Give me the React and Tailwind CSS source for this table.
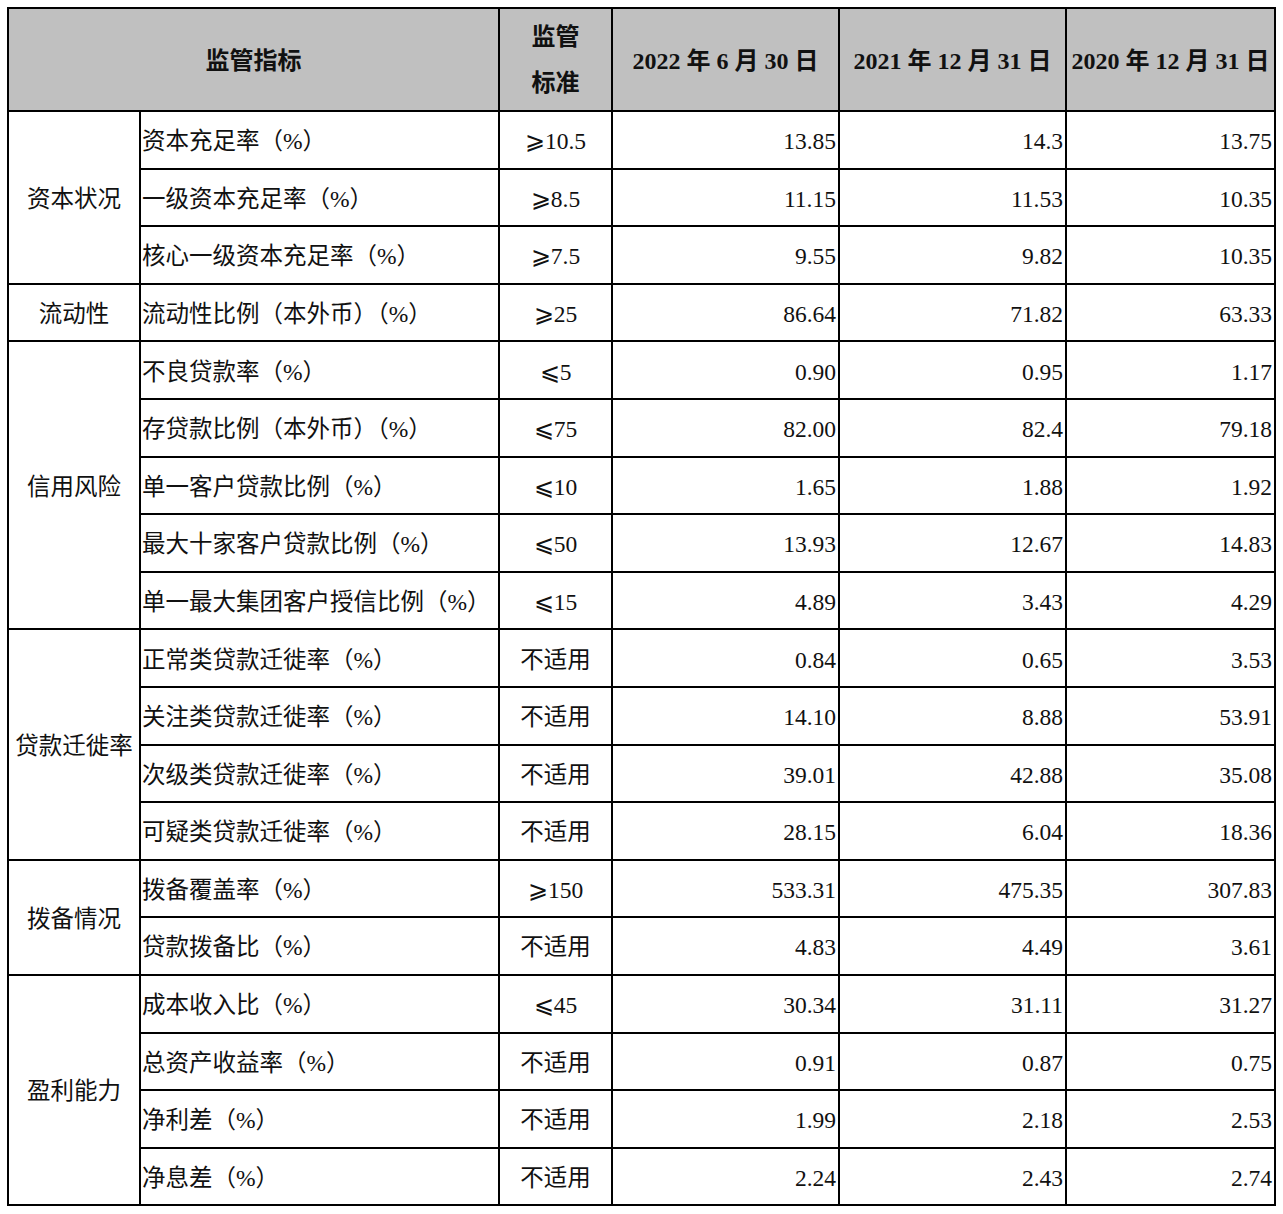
import React from 'react';

const groups = [
    {
        name: '资本状况',
        rows: [
            ['资本充足率（%）', '⩾10.5', '13.85', '14.3', '13.75'],
            ['一级资本充足率（%）', '⩾8.5', '11.15', '11.53', '10.35'],
            ['核心一级资本充足率（%）', '⩾7.5', '9.55', '9.82', '10.35'],
        ],
    },
    {
        name: '流动性',
        rows: [['流动性比例（本外币）（%）', '⩾25', '86.64', '71.82', '63.33']],
    },
    {
        name: '信用风险',
        rows: [
            ['不良贷款率（%）', '⩽5', '0.90', '0.95', '1.17'],
            ['存贷款比例（本外币）（%）', '⩽75', '82.00', '82.4', '79.18'],
            ['单一客户贷款比例（%）', '⩽10', '1.65', '1.88', '1.92'],
            ['最大十家客户贷款比例（%）', '⩽50', '13.93', '12.67', '14.83'],
            ['单一最大集团客户授信比例（%）', '⩽15', '4.89', '3.43', '4.29'],
        ],
    },
    {
        name: '贷款迁徙率',
        rows: [
            ['正常类贷款迁徙率（%）', '不适用', '0.84', '0.65', '3.53'],
            ['关注类贷款迁徙率（%）', '不适用', '14.10', '8.88', '53.91'],
            ['次级类贷款迁徙率（%）', '不适用', '39.01', '42.88', '35.08'],
            ['可疑类贷款迁徙率（%）', '不适用', '28.15', '6.04', '18.36'],
        ],
    },
    {
        name: '拨备情况',
        rows: [
            ['拨备覆盖率（%）', '⩾150', '533.31', '475.35', '307.83'],
            ['贷款拨备比（%）', '不适用', '4.83', '4.49', '3.61'],
        ],
    },
    {
        name: '盈利能力',
        rows: [
            ['成本收入比（%）', '⩽45', '30.34', '31.11', '31.27'],
            ['总资产收益率（%）', '不适用', '0.91', '0.87', '0.75'],
            ['净利差（%）', '不适用', '1.99', '2.18', '2.53'],
            ['净息差（%）', '不适用', '2.24', '2.43', '2.74'],
        ],
    },
];

const cell = 'border-2 border-black p-0';
const body = 'border-2 border-black pt-[4px] pb-0';

export default function App() {
    return (
        <div
            className="bg-white w-[1283px] h-[1214px] pt-[7px] pl-[7px] text-[#111]"
            style={{ fontFamily: '"Liberation Serif", "Noto Sans CJK SC", serif' }}
        >
            <table className="border-collapse table-fixed w-[1267px]">
                <colgroup>
                    <col className="w-[132px]" />
                    <col className="w-[359px]" />
                    <col className="w-[113px]" />
                    <col className="w-[227px]" />
                    <col className="w-[227px]" />
                    <col className="w-[209px]" />
                </colgroup>
                <thead>
                    <tr className="h-[103px] bg-[#c0c0c0] font-bold text-[24px]">
                        <th colSpan={2} className={cell + ' text-center pt-[2px]'}>
                            监管指标
                        </th>
                        <th className={cell + ' text-center leading-[46px]'}>
                            监管
                            <br />
                            标准
                        </th>
                        <th className={cell + ' text-center whitespace-nowrap pt-[2px]'}>2022 年 6 月 30 日</th>
                        <th className={cell + ' text-center whitespace-nowrap pt-[2px]'}>2021 年 12 月 31 日</th>
                        <th className={cell + ' text-center whitespace-nowrap pt-[2px]'}>2020 年 12 月 31 日</th>
                    </tr>
                </thead>
                <tbody className="text-[23.5px] font-normal">
                    {groups.map((g) =>
                        g.rows.map((r, i) => (
                            <tr key={g.name + i} className="h-[57.6px]">
                                {i === 0 && (
                                    <td rowSpan={g.rows.length} className={body + ' px-0 text-center whitespace-nowrap'}>
                                        {g.name}
                                    </td>
                                )}
                                <td className={body + ' pl-[1px] pr-0 whitespace-nowrap'}>{r[0]}</td>
                                <td className={body + ' px-0 text-center whitespace-nowrap'}>{r[1]}</td>
                                <td className={body + ' pl-0 text-right pr-[2px]'}>{r[2]}</td>
                                <td className={body + ' pl-0 text-right pr-[2px]'}>{r[3]}</td>
                                <td className={body + ' pl-0 text-right pr-[2px]'}>{r[4]}</td>
                            </tr>
                        ))
                    )}
                </tbody>
            </table>
        </div>
    );
}
